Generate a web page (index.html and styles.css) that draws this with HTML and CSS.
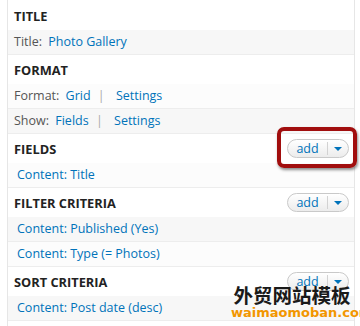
FILE: index.html
```html
<!DOCTYPE html>
<html lang="en">
<head>
    <meta charset="UTF-8">
    <meta name="viewport" content="width=device-width, initial-scale=1.0">
    <title>View settings</title>
    <link rel="stylesheet" href="styles.css">
</head>
<body>

    <div class="panel">

        <div class="section">
            <div class="section-head">
                <h3>Title</h3>
            </div>
            <div class="row odd"><span class="label">Title:</span> <a href="#">Photo Gallery</a></div>
        </div>

        <div class="section">
            <div class="section-head">
                <h3>Format</h3>
            </div>
            <div class="row even"><span class="label">Format:</span> <a href="#">Grid</a> <span class="sep">|</span> <a href="#">Settings</a></div>
            <div class="row odd"><span class="label">Show:</span> <a href="#">Fields</a> <span class="sep">|</span> <a href="#">Settings</a></div>
        </div>

        <div class="section">
            <div class="section-head">
                <h3>Fields</h3>
                <div class="add-button">
                    <a href="#">add</a>
                    <span class="arrow"></span>
                </div>
                <div class="highlight"></div>
            </div>
            <div class="row even item"><a href="#">Content: Title</a></div>
        </div>

        <div class="section">
            <div class="section-head">
                <h3>Filter criteria</h3>
                <div class="add-button">
                    <a href="#">add</a>
                    <span class="arrow"></span>
                </div>
            </div>
            <div class="row odd item"><a href="#">Content: Published (Yes)</a></div>
            <div class="row even item"><a href="#">Content: Type (= Photos)</a></div>
        </div>

        <div class="section">
            <div class="section-head">
                <h3>Sort criteria</h3>
                <div class="add-button">
                    <a href="#">add</a>
                    <span class="arrow"></span>
                </div>
            </div>
            <div class="row odd item"><a href="#">Content: Post date (desc)</a></div>
        </div>

    </div>

    <div class="watermark">
        <div class="wm-cn">外贸网站模板</div>
        <div class="wm-en">waimaomoban.com</div>
    </div>

</body>
</html>
```

FILE: styles.css
```css
body {
    margin: 0;
    padding: 0;
    background-color: #fff;
    font-family: "Open Sans", sans-serif;
    font-size: 12.5px;
    color: #555;
    position: relative;
    overflow: hidden;
    height: 326px;
}

.panel {
    margin-left: 7px;
    width: 346px;
    padding-top: 1px;
    border-left: 1px solid #e6e6e6;
    border-right: 1px solid #e6e6e6;
    min-height: 326px;
}

.section-head {
    position: relative;
    height: 29px;
    display: flex;
    align-items: center;
    justify-content: space-between;
    padding: 0 5px 0 6px;
    background-color: #fff;
}

.section-head h3 {
    margin: 0;
    font-size: 12.8px;
    font-weight: bold;
    text-transform: uppercase;
    color: #222;
}

.row {
    height: 24px;
    line-height: 24px;
    padding-left: 6px;
    border-bottom: 1px solid #ededed;
    white-space: nowrap;
}

.row.odd {
    background-color: #f7f7f7;
}

.row.even {
    background-color: #fcfcfc;
}

.row.item {
    padding-left: 9px;
}

.label {
    margin-right: 3px;
}

.sep {
    color: #aaa;
    margin: 0 8px 0 4px;
}

a {
    color: #0073ba;
    text-decoration: none;
}

.add-button {
    display: flex;
    align-items: center;
    height: 19px;
    width: 62px;
    border: 1px solid #c9c9c9;
    border-radius: 10px;
    background: linear-gradient(#ffffff, #ececec);
    box-sizing: border-box;
}

.add-button a {
    flex: 1;
    text-align: center;
    font-size: 12.5px;
    border-right: 1px solid #d2d2d2;
    height: 13px;
    line-height: 13px;
}

.arrow {
    width: 0;
    height: 0;
    margin: 1px 6px 0 6px;
    border-left: 4px solid transparent;
    border-right: 4px solid transparent;
    border-top: 4px solid #0073ba;
}

/* red box around the first add button */
.highlight {
    position: absolute;
    left: 269px;
    top: -7px;
    width: 72px;
    height: 33px;
    border: 4px solid #a10e0e;
    border-radius: 7px;
    box-shadow: 1px 2px 3px rgba(0, 0, 0, 0.45);
}

.watermark {
    position: absolute;
    left: 231px;
    top: 284px;
    width: 122px;
    text-align: center;
}

.wm-cn {
    font-family: "Noto Sans CJK SC", sans-serif;
    font-weight: bold;
    font-size: 19.5px;
    line-height: 22px;
    color: #1a1a1a;
}

.wm-en {
    font-family: "DejaVu Sans", sans-serif;
    font-weight: bold;
    font-size: 13px;
    line-height: 14px;
    color: #f29600;
}
```
